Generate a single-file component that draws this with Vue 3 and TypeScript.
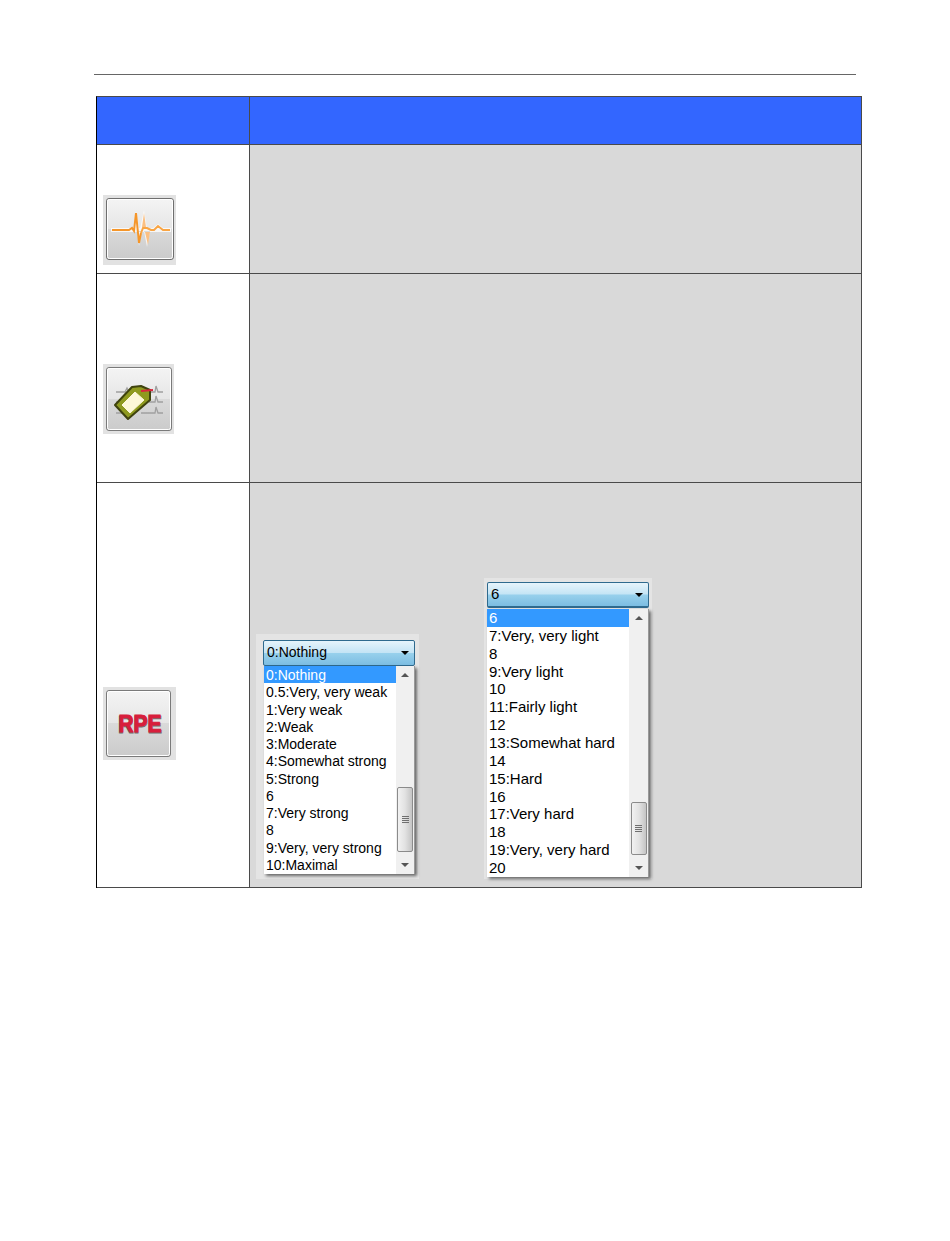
<script setup lang="ts">
const rpeA: string[] = ['0:Nothing','0.5:Very, very weak','1:Very weak','2:Weak','3:Moderate','4:Somewhat strong','5:Strong','6','7:Very strong','8','9:Very, very strong','10:Maximal']
const rpeB: string[] = ['6','7:Very, very light','8','9:Very light','10','11:Fairly light','12','13:Somewhat hard','14','15:Hard','16','17:Very hard','18','19:Very, very hard','20']
const menus = [
  { key: 'a', value: rpeA[0], items: rpeA },
  { key: 'b', value: rpeB[0], items: rpeB },
]
</script>

<template>
  <div class="page">
    <div class="rule"></div>
    <div class="table">
      <div class="cell head"></div>
      <div class="cell head"></div>

      <div class="cell left pad-1">
        <div class="shot">
          <svg width="73" height="70" viewBox="0 0 73 70">
            <defs>
              <linearGradient id="b1" x1="0" y1="0" x2="0" y2="1">
                <stop offset="0" stop-color="#f4f4f4" /><stop offset=".5" stop-color="#e6e6e6" />
                <stop offset=".5" stop-color="#dadada" /><stop offset="1" stop-color="#cbcbcb" />
              </linearGradient>
            </defs>
            <rect x="3.5" y="3.5" width="67" height="61" rx="2.5" fill="url(#b1)" stroke="#6f6f6f" />
            <rect x="4.5" y="4.5" width="65" height="59" rx="2" fill="none" stroke="#fff" />
            <path d="M8 33H68V37H8ZM31 34L33 16L36 34ZM34 36L36 51L39 36ZM37 34L41 15L44 34ZM41 36L44 52L47 36ZM50 33L55 29L60 33Z" fill="#fff" opacity=".75" />
            <path d="M9 35H26L29 33L31 36L33 18L36 48L38 38" fill="none" stroke="#f5962a" stroke-width="2" />
            <path d="M39 32L41 18L43 32ZM42 37L45 50L47 37Z" fill="#fbc083" />
            <path d="M38 38L40 33H44L48 35H51L55 31L60 35H67" fill="none" stroke="#f9a544" stroke-width="2" />
          </svg>
        </div>
      </div>
      <div class="cell right"></div>

      <div class="cell left pad-2">
        <div class="shot">
          <svg width="71" height="70" viewBox="0 0 71 70">
            <defs>
              <linearGradient id="b2" x1="0" y1="0" x2="0" y2="1">
                <stop offset="0" stop-color="#f4f4f4" /><stop offset=".5" stop-color="#e6e6e6" />
                <stop offset=".5" stop-color="#dadada" /><stop offset="1" stop-color="#cbcbcb" />
              </linearGradient>
            </defs>
            <rect x="3.5" y="3.5" width="65" height="63" rx="2.5" fill="url(#b2)" stroke="#7a7a7a" />
            <rect x="4.5" y="4.5" width="63" height="61" rx="2" fill="none" stroke="#fff" />
            <path d="M13 28H22L24 24L26 28M46 28H52L53 22L55 28H60M13 38H20M46 38H52L53 32L55 38H60M13 49H26L28 45L30 49M38 49H52L53 43L55 49H60" fill="none" stroke="#a0a0a0" stroke-width="1.3" />
            <path d="M12 41L29 23L38 22L47 26L47 36L25 55Z" fill="#8f9a1f" stroke="#3f430e" stroke-width="2" stroke-linejoin="round" />
            <path d="M19 41L32 28L41 36L27 49Z" fill="#fdf8d8" stroke="#fdf8d8" stroke-linejoin="round" />
            <path d="M38 27L50 26" stroke="#d8263c" stroke-width="1.8" />
          </svg>
        </div>
      </div>
      <div class="cell right"></div>

      <div class="cell left pad-3">
        <div class="shot">
          <svg width="73" height="73" viewBox="0 0 73 73">
            <defs>
              <linearGradient id="b3" x1="0" y1="0" x2="0" y2="1">
                <stop offset="0" stop-color="#f4f4f4" /><stop offset=".5" stop-color="#e6e6e6" />
                <stop offset=".5" stop-color="#dadada" /><stop offset="1" stop-color="#cbcbcb" />
              </linearGradient>
            </defs>
            <rect x="3.5" y="3.5" width="64" height="66" rx="2.5" fill="url(#b3)" stroke="#7a7a7a" />
            <rect x="4.5" y="4.5" width="62" height="64" rx="2" fill="none" stroke="#fff" />
            <text x="15" y="45.8" class="rpe rpe-shadow" textLength="44" lengthAdjust="spacingAndGlyphs">RPE</text>
            <text x="15.5" y="45" class="rpe rpe-main" textLength="43" lengthAdjust="spacingAndGlyphs">RPE</text>
          </svg>
        </div>
      </div>
      <div class="cell right menus">
        <div v-for="menu in menus" :key="menu.key" class="dropdown" :class="`dropdown-${menu.key}`">
          <div class="combo">
            <span>{{ menu.value }}</span>
            <i class="caret"></i>
          </div>
          <div class="list">
            <ul>
              <li v-for="(item, i) in menu.items" :key="item" :class="{ selected: i === 0 }">{{ item }}</li>
            </ul>
            <div class="scrollbar">
              <i class="arrow up"></i>
              <div class="track"></div>
              <div class="thumb"><b></b><b></b><b></b><b></b></div>
              <i class="arrow down"></i>
            </div>
          </div>
        </div>
      </div>
    </div>
  </div>
</template>

<style scoped>
.page {
  width: 950px;
  height: 1241px;
  box-sizing: border-box;
  padding: 74px 94px 0;
  background: #fff;
  font-family: "Liberation Sans", Arial, sans-serif;
}
.rule {
  width: 762px;
  height: 1px;
  background: #666;
}
.table {
  width: 766px;
  margin: 21px 0 0 2px;
  box-sizing: border-box;
  border-top: 1px solid #4a4a4a;
  border-left: 1px solid #000;
  display: grid;
  grid-template-columns: 153px 612px;
  grid-template-rows: 48px 129px 209px 405px;
}
.cell {
  box-sizing: border-box;
  border-right: 1px solid #4a4a4a;
  border-bottom: 1px solid #4a4a4a;
}
.head {
  background: #3366ff;
}
.left {
  background: #fff;
  display: flex;
  align-items: flex-end;
  padding-left: 6px;
}
.pad-1 { padding-bottom: 8px; }
.pad-2 { padding-bottom: 48px; }
.pad-3 { padding-bottom: 127px; }
.right {
  background: #d9d9d9;
}
.shot {
  background: #e2e2e2;
  line-height: 0;
}
.shot svg {
  display: block;
}
.rpe {
  font-family: "Liberation Sans", Arial, sans-serif;
  font-weight: 700;
  font-size: 23px;
  stroke-width: 1px;
}
.rpe-main { fill: #d81e3c; stroke: #d81e3c; }
.rpe-shadow { fill: #6e6e6e; stroke: #6e6e6e; }
.menus {
  display: flex;
  align-items: flex-end;
  gap: 65px;
  padding: 0 0 8px 6px;
}
.dropdown {
  box-sizing: border-box;
  background: #e4e4e4;
  display: flex;
  flex-direction: column;
}
.dropdown-a {
  width: 163px;
  height: 245px;
  padding: 6px 4px 5px 7px;
}
.dropdown-b {
  width: 168px;
  height: 301px;
  padding: 4px 3px 2px 3px;
}
.combo {
  box-sizing: border-box;
  height: 26px;
  border: 1px solid #2f6a8e;
  border-radius: 2px;
  background: linear-gradient(#e6f4fb, #c4e4f5 48%, #97d0ec 52%, #7cbde2);
  display: flex;
  align-items: center;
  justify-content: space-between;
  padding: 0 5px 2px 3px;
  font-size: 14px;
  color: #000;
}
.dropdown-b .combo {
  margin-bottom: 1px;
  border-bottom-width: 2px;
  font-size: 15px;
}
.caret {
  width: 0;
  height: 0;
  margin-top: 2px;
  border-left: 4px solid transparent;
  border-right: 4px solid transparent;
  border-top: 4px solid #000;
}
.list {
  background: #fff;
  display: flex;
  justify-content: space-between;
  box-shadow: 2px 2px 3px rgba(0, 0, 0, 0.55);
  border-right: 1px solid #999;
  box-sizing: border-box;
}
.dropdown-a .list {
  height: 208px;
  margin-left: 1px;
}
.dropdown-b .list {
  height: 268px;
}
ul {
  list-style: none;
  margin: 0;
  padding: 0;
  font-size: 14px;
  color: #000;
  flex: 1;
}
.dropdown-b ul {
  font-size: 15px;
}
li {
  padding-left: 2px;
  white-space: nowrap;
}
.dropdown-a li {
  box-sizing: border-box;
  height: 17.27px;
  padding-top: 1px;
  line-height: 17.27px;
}
.dropdown-b li {
  height: 17.86px;
  line-height: 17.86px;
}
.selected {
  background: #3399ff;
  color: #fff;
}
.scrollbar {
  background: #f0f0f0;
  display: flex;
  flex-direction: column;
  align-items: center;
  box-sizing: border-box;
}
.dropdown-a .scrollbar { width: 18px; }
.dropdown-b .scrollbar { width: 19px; }
.arrow {
  flex: none;
  display: block;
  width: 0;
  height: 0;
  border-left: 4px solid transparent;
  border-right: 4px solid transparent;
}
.arrow.up {
  margin: 7px 0 0;
  border-bottom: 4px solid #555;
}
.arrow.down {
  margin: 0 0 7px;
  border-top: 4px solid #555;
}
.track {
  flex: 1;
}
.thumb {
  box-sizing: border-box;
  width: 16px;
  border: 1px solid #8b8b8b;
  border-radius: 2px;
  background: linear-gradient(90deg, #f2f2f2, #e2e2e2 50%, #c4c4c4);
  display: flex;
  flex-direction: column;
  align-items: center;
  justify-content: center;
  gap: 1px;
  margin-bottom: 11px;
}
.dropdown-a .thumb { height: 65px; }
.dropdown-b .thumb { height: 53px; }
.thumb b {
  display: block;
  width: 7px;
  height: 1px;
  background: #6f6f6f;
}
</style>
